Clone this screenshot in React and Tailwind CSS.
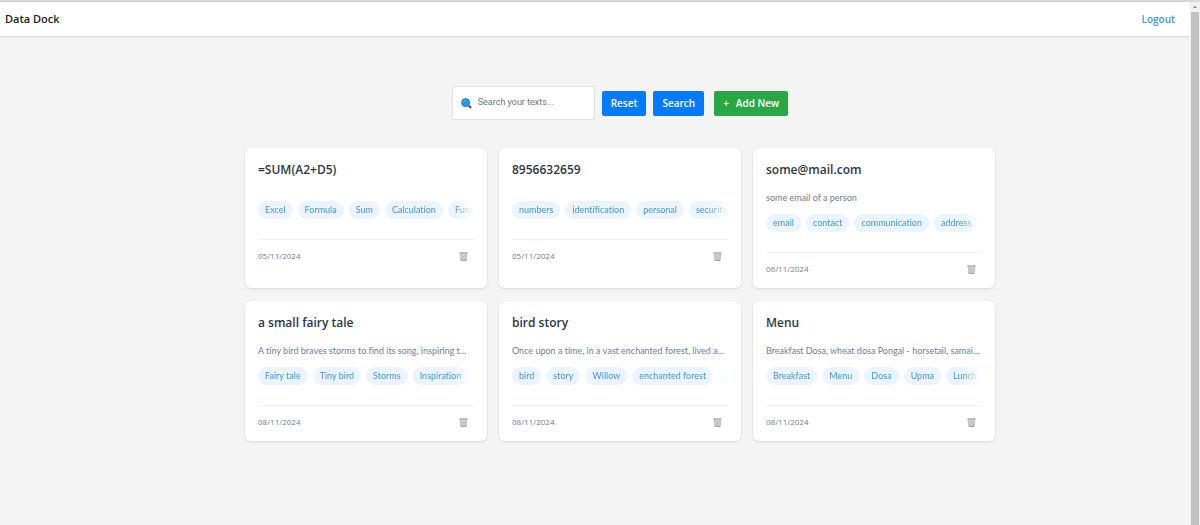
import React, { useState } from 'react';

const texts = [
  { id: 1, title: '=SUM(A2+D5)', description: '', tags: ['Excel', 'Formula', 'Sum', 'Calculation', 'Function'], date: '05/11/2024' },
  { id: 2, title: '8956632659', description: '', tags: ['numbers', 'identification', 'personal', 'security'], date: '05/11/2024' },
  { id: 3, title: 'some@mail.com', description: 'some email of a person', tags: ['email', 'contact', 'communication', 'address'], date: '06/11/2024' },
  { id: 4, title: 'a small fairy tale', description: 'A tiny bird braves storms to find its song, inspiring t...', tags: ['Fairy tale', 'Tiny bird', 'Storms', 'Inspiration'], date: '08/11/2024' },
  { id: 5, title: 'bird story', description: 'Once upon a time, in a vast enchanted forest, lived a...', tags: ['bird', 'story', 'Willow', 'enchanted forest', 'courage'], date: '08/11/2024' },
  { id: 6, title: 'Menu', description: 'Breakfast Dosa, wheat dosa Pongal - horsetail, samai...', tags: ['Breakfast', 'Menu', 'Dosa', 'Upma', 'Lunch'], date: '08/11/2024' }
];

const SearchIcon = () => (
  <svg width="11" height="11" viewBox="0 0 11 11" className="shrink-0" aria-hidden="true">
    <path d="M7.2 7.2 L9.6 9.4" stroke="#5b4090" strokeWidth="2" strokeLinecap="round" />
    <circle cx="4.6" cy="4.6" r="4" fill="#12a0ea" stroke="#2b7fc0" strokeWidth="1" />
    <path d="M2.4 4 A2.6 2.6 0 0 1 4.6 2.2" stroke="#5cc6f7" strokeWidth="0.8" fill="none" />
  </svg>
);

const TrashIcon = () => (
  <svg width="9" height="9" viewBox="0 0 9 9" aria-hidden="true">
    <path d="M1 1.5 H8 L7.4 8.5 H1.6 Z" fill="#d0d0d0" />
    <path d="M0.3 0.4 H8.7 V1.6 H0.3 Z" fill="#9b9b9b" />
    <path d="M1.1 2 L1.7 8 M7.9 2 L7.3 8 M2.5 3 L6.5 7 M6.5 3 L2.5 7" stroke="#b0b0b0" strokeWidth="0.6" />
    <path d="M1.6 7.8 H7.4 V8.8 H1.6 Z" fill="#9b9b9b" />
  </svg>
);

const TextCard = ({ item }) => (
  <article className="flex min-w-0 flex-col rounded-md bg-white p-[13px] shadow-[0_1px_3px_rgba(0,0,0,0.12)]">
    <h2 className="mb-3 text-[12px] leading-[18px] font-semibold text-[#2d3748]">{item.title}</h2>
    <p className="mb-[10px] font-['Lato','Open_Sans',sans-serif] text-[9px] leading-[13px] whitespace-nowrap text-[#718096] [font-variant-ligatures:none]">
      {item.description}
    </p>
    <div className="mb-5 flex gap-[5px] overflow-hidden font-['Lato','Open_Sans',sans-serif] [font-variant-ligatures:none] [mask-image:linear-gradient(to_right,black_calc(100%-20px),transparent)]">
      {item.tags.map(tag => (
        <span key={tag} className="shrink-0 rounded-full bg-[#ebf4ff] px-[7px] text-[9px] leading-[18px] text-[#4299e1]">
          {tag}
        </span>
      ))}
    </div>
    <div className="flex items-center justify-between border-t border-[#edf2f7] pt-[10px] pr-[6px]">
      <time className="text-[8px] leading-[12px] text-[#718096]">{item.date}</time>
      <button type="button" aria-label={`Delete ${item.title}`}>
        <TrashIcon />
      </button>
    </div>
  </article>
);

const App = () => {
  const [query, setQuery] = useState('');

  return (
    <div className="flex min-h-screen border-t-2 border-[#d9d9d9] bg-[#f4f4f4] font-['Open_Sans','Noto_Sans',sans-serif]">
      <div className="min-w-0 flex-1">
        <header className="flex h-[34px] items-center justify-between bg-white pr-[15px] pl-[5px] shadow-[0_1px_2px_rgba(0,0,0,0.12)]">
          <h1 className="text-[11px] font-semibold text-[#222]">Data Dock</h1>
          <a href="#logout" className="text-[10px] font-semibold text-[#4299e1]">Logout</a>
        </header>

        <main className="pt-[50px] pl-[50px]">
          <form className="mb-7 flex items-center justify-center" onSubmit={e => e.preventDefault()}>
            <label className="flex h-[34px] w-[143px] items-center gap-[6px] rounded-xs border border-[#e2e2e2] bg-white px-2">
              <SearchIcon />
              <input
                type="text"
                aria-label="Search your texts"
                placeholder="Search your texts..."
                value={query}
                onChange={e => setQuery(e.target.value)}
                className="w-full min-w-0 font-['Roboto','Liberation_Sans',sans-serif] text-[9px] outline-none placeholder:text-[#757575]"
              />
            </label>
            <button type="button" onClick={() => setQuery('')} className="ml-[7px] h-[25px] rounded-xs bg-[#007bff] px-[9px] text-[10px] font-semibold text-white">
              Reset
            </button>
            <button type="submit" className="ml-[7px] h-[25px] rounded-xs bg-[#007bff] px-[9px] text-[10px] font-semibold text-white">
              Search
            </button>
            <button type="button" className="ml-[10px] flex h-[25px] items-center gap-[7px] rounded-xs bg-[#28a745] px-[9px] text-[10px] font-semibold text-white">
              <span>+</span>
              Add New
            </button>
          </form>

          <section className="mx-auto grid max-w-[750px] grid-cols-3 gap-x-3 gap-y-[13px]">
            {texts.map(item => <TextCard key={item.id} item={item} />)}
          </section>
        </main>
      </div>

      {/* Scroll track */}
      <div className="flex w-[10px] flex-col items-center bg-[#f1f1f1]" aria-hidden="true">
        <svg width="10" height="10" viewBox="0 0 10 10">
          <path d="M3 6 L5 3.5 L7 6 Z" fill="#8a8a8a" />
        </svg>
        <div className="w-2 flex-1 bg-[#c1c1c1]" />
      </div>
    </div>
  );
};

export default App;
